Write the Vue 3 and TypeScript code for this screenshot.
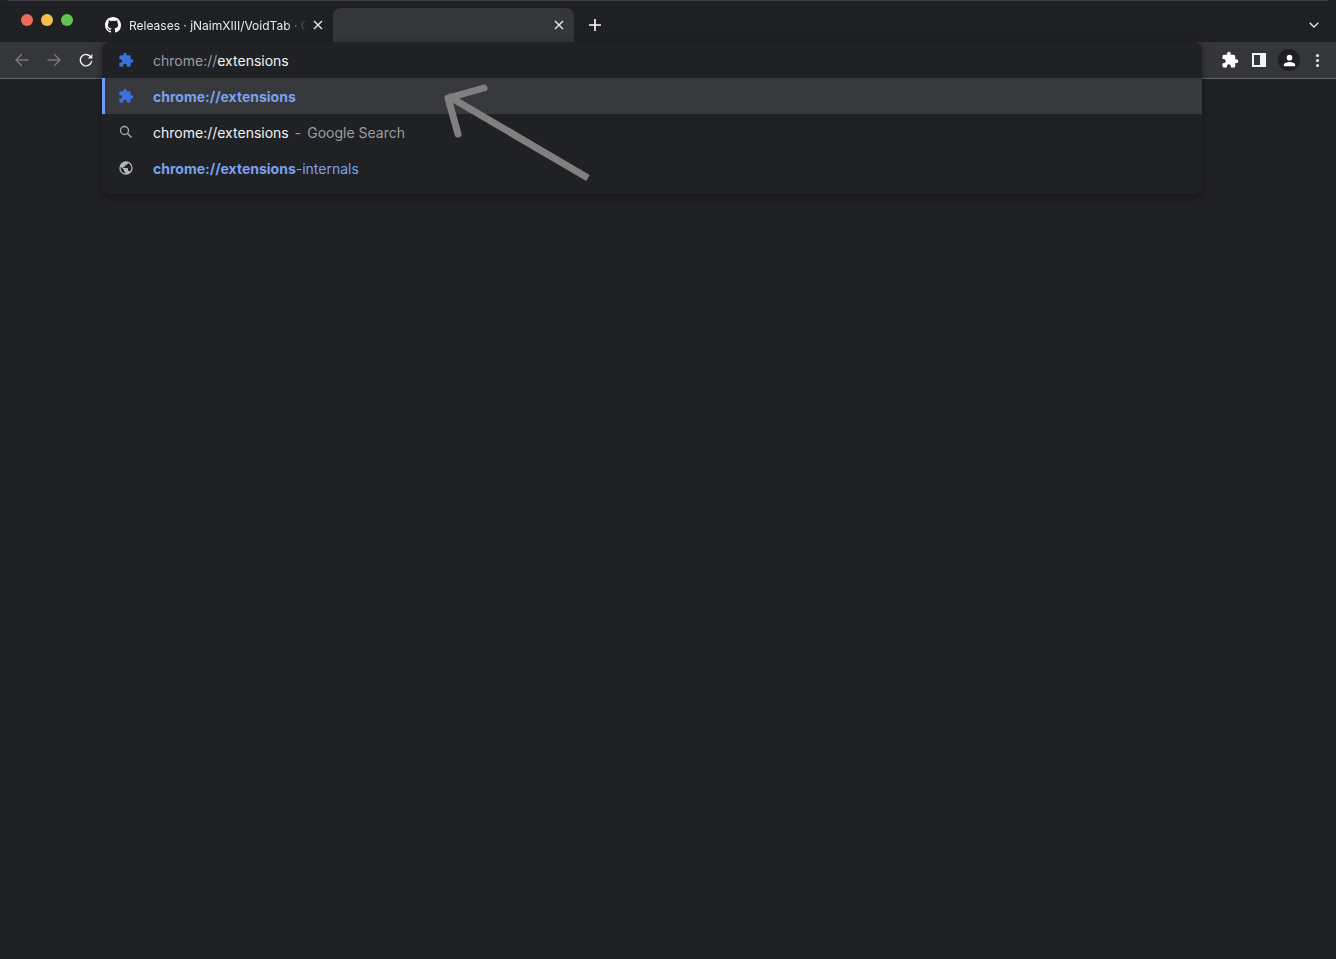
<script setup lang="ts">
const puzzle = 'M20.5 11H19V7a2 2 0 0 0-2-2h-4V3.5a2.5 2.5 0 0 0-5 0V5H4a2 2 0 0 0-2 2v3.8h1.5a2.7 2.7 0 0 1 0 5.4H2V20a2 2 0 0 0 2 2h3.8v-1.5a2.7 2.7 0 0 1 5.4 0V22H17a2 2 0 0 0 2-2v-4h1.5a2.5 2.5 0 0 0 0-5z'
const github = 'M8 0C3.58 0 0 3.58 0 8c0 3.54 2.29 6.53 5.47 7.59.4.07.55-.17.55-.38 0-.19-.01-.82-.01-1.49-2.01.37-2.53-.49-2.69-.94-.09-.23-.48-.94-.82-1.13-.28-.15-.68-.52-.01-.53.63-.01 1.08.58 1.23.82.72 1.21 1.87.87 2.33.66.07-.52.28-.87.51-1.07-1.78-.2-3.64-.89-3.64-3.95 0-.87.31-1.59.82-2.15-.08-.2-.36-1.02.08-2.12 0 0 .67-.21 2.2.82.64-.18 1.32-.27 2-.27s1.36.09 2 .27c1.53-1.04 2.2-.82 2.2-.82.44 1.1.16 1.92.08 2.12.51.56.82 1.27.82 2.15 0 3.07-1.87 3.75-3.65 3.95.29.25.54.73.54 1.48 0 1.07-.01 1.93-.01 2.2 0 .21.15.46.55.38A8.01 8.01 0 0 0 16 8c0-4.42-3.58-8-8-8z'
</script>

<template>
  <div class="window">
    <div class="tabstrip">
      <div class="lights">
        <span class="light red"></span>
        <span class="light yellow"></span>
        <span class="light green"></span>
      </div>
      <div class="tab">
        <svg class="favicon" viewBox="0 0 16 16"><path :d="github" fill="#fff" /></svg>
        <span class="tab-title">Releases · jNaimXIII/VoidTab · GitHub</span>
        <svg class="close" viewBox="0 0 10 10"><path d="M1 1l8 8M9 1l-8 8" /></svg>
      </div>
      <div class="tab active">
        <svg class="close" viewBox="0 0 10 10"><path d="M1 1l8 8M9 1l-8 8" /></svg>
      </div>
      <svg class="plus" viewBox="0 0 12 12"><path d="M6 0v12M0 6h12" /></svg>
      <svg class="chevron" viewBox="0 0 10 6"><path d="M.7.8L5 5l4.3-4.2" /></svg>
    </div>

    <div class="toolbar">
      <div class="nav">
        <svg class="nav-icon dim" viewBox="0 0 14 14"><path d="M13.5 7H1M6.8 1.2L1 7l5.8 5.8" /></svg>
        <svg class="nav-icon dim" viewBox="0 0 14 14"><path d="M.5 7H13M7.2 1.2L13 7l-5.8 5.8" /></svg>
        <svg class="nav-icon" viewBox="0 0 14 14">
          <path d="M11.9 4.1A5.7 5.7 0 1 0 12.7 8" />
          <path class="solid" d="M13.4 1v4.6H8.8z" />
        </svg>
      </div>
      <div class="actions">
        <svg class="act-icon" viewBox="0 0 24 24"><path :d="puzzle" fill="#fff" /></svg>
        <span class="panel-icon"></span>
        <span class="avatar">
          <svg viewBox="0 0 24 24"><path d="M12 12a4 4 0 1 0 0-8 4 4 0 0 0 0 8zm0 2c-2.700 0-8 1.300-8 4v2h16v-2c0-2.700-5.300-4-8-4z" fill="#fff" /></svg>
        </span>
        <span class="dots"><i></i><i></i><i></i></span>
      </div>
    </div>

    <div class="page"></div>

    <div class="omnibox">
      <div class="row input">
        <svg class="row-icon" viewBox="0 0 24 24"><path :d="puzzle" fill="#3b6fd9" /></svg>
        <span class="muted">chrome://</span><span class="white">extensions</span>
      </div>
      <div class="row selected">
        <svg class="row-icon" viewBox="0 0 24 24"><path :d="puzzle" fill="#3b6fd9" /></svg>
        <span class="link bold">chrome://extensions</span>
      </div>
      <div class="row">
        <svg class="row-icon" viewBox="0 0 16 16">
          <circle cx="6.500" cy="6.500" r="4" fill="none" stroke="#a9abae" stroke-width="1.300" />
          <path d="M9.500 9.500l4 4" stroke="#a9abae" stroke-width="1.500" />
        </svg>
        <span class="white">chrome://extensions</span><span class="muted sep">-</span><span class="muted">Google Search</span>
      </div>
      <div class="row">
        <svg class="row-icon" viewBox="0 0 24 24">
          <path fill="#b4b6b9" d="M12 2a10 10 0 1 0 0 20 10 10 0 0 0 0-20zM4 12c0-.6.1-1.200.2-1.800L9 15v1a2 2 0 0 0 2 2v1.900A8 8 0 0 1 4 12zm13.900 5.400A2 2 0 0 0 16 16h-1v-3a1 1 0 0 0-1-1H8v-2h2a1 1 0 0 0 1-1V7h2a2 2 0 0 0 2-2v-.4a8 8 0 0 1 2.900 12.800z" />
        </svg>
        <span class="link bold">chrome://extensions</span><span class="link">-internals</span>
      </div>
    </div>

    <svg class="arrow" viewBox="0 0 160 110">
      <path d="M146 96L6 14" stroke-linecap="butt" />
      <path d="M42 6L6 16l10 36" stroke-linecap="round" stroke-linejoin="round" />
    </svg>
  </div>
</template>

<style scoped>
.window {
  position: relative;
  display: flex;
  flex-direction: column;
  height: 959px;
  background: #202124;
  border-radius: 10px 10px 0 0;
  overflow: hidden;
  font-family: "Inter", "Liberation Sans", sans-serif;
  color: #fff;
}

.tabstrip {
  display: flex;
  align-items: center;
  flex: 0 0 42px;
  background: #1f2024;
  border-top: 1px solid #3f4043;
  box-sizing: border-box;
  padding-top: 7px;
}

.lights {
  display: flex;
  gap: 8px;
  padding: 0 0 11px 21px;
  width: 72px;
}

.light {
  width: 12px;
  height: 12px;
  border-radius: 50%;
}

.red { background: #ec6a5e; }
.yellow { background: #f4bf4f; }
.green { background: #61c454; }

.tab {
  display: flex;
  align-items: center;
  width: 240px;
  height: 34px;
  padding: 0 10px 0 12px;
  box-sizing: border-box;
  border-radius: 8px 8px 0 0;
}

.tab.active {
  width: 241px;
  background: #35363a;
  justify-content: flex-end;
}

.favicon {
  width: 16px;
  height: 16px;
  flex: none;
  margin-right: 8px;
}

.tab-title {
  flex: 1;
  font-size: 12px;
  white-space: nowrap;
  overflow: hidden;
  color: #e8eaed;
  -webkit-mask-image: linear-gradient(to right, #000 88%, transparent 100%);
  mask-image: linear-gradient(to right, #000 88%, transparent 100%);
}

.close {
  width: 10px;
  height: 10px;
  flex: none;
  margin-left: 6px;
}

.close path {
  stroke: #e8eaed;
  stroke-width: 1.400;
  fill: none;
}

.plus {
  width: 12px;
  height: 12px;
  margin-left: 15px;
}

.plus path {
  stroke: #fff;
  stroke-width: 1.600;
  fill: none;
}

.chevron {
  width: 10px;
  height: 6px;
  margin-left: auto;
  margin-right: 17px;
}

.chevron path {
  stroke: #e8eaed;
  stroke-width: 1.300;
  fill: none;
}

.toolbar {
  display: flex;
  align-items: center;
  justify-content: space-between;
  flex: 0 0 37px;
  box-sizing: border-box;
  background: #35363a;
  border-bottom: 1px solid #5f6063;
}

.nav {
  display: flex;
  gap: 18px;
  padding-left: 15px;
}

.nav-icon {
  width: 14px;
  height: 14px;
}

.nav-icon path {
  fill: none;
  stroke: #f1f3f4;
  stroke-width: 1.400;
}

.nav-icon path.solid {
  fill: #f1f3f4;
  stroke: none;
}

.nav-icon.dim path {
  stroke: #77787b;
}

.actions {
  display: flex;
  align-items: center;
  gap: 11px;
  padding-right: 11px;
}

.act-icon {
  width: 18px;
  height: 18px;
}

.panel-icon {
  width: 14px;
  height: 14px;
  box-sizing: border-box;
  border: 2px solid #f1f3f4;
  border-left-width: 2px;
  border-right-width: 6px;
  margin: 0 1px 0 2px;
}

.avatar {
  display: flex;
  align-items: center;
  justify-content: center;
  width: 22px;
  height: 22px;
  border-radius: 50%;
  background: #1f2024;
}

.avatar svg {
  width: 17px;
  height: 17px;
}

.dots {
  display: flex;
  flex-direction: column;
  gap: 2px;
  padding: 0 6px 0 5px;
}

.dots i {
  width: 3px;
  height: 3px;
  border-radius: 50%;
  background: #f1f3f4;
}

.page {
  flex: 1;
  background: #202124;
}

.omnibox {
  position: absolute;
  left: 102px;
  top: 42px;
  width: 1100px;
  height: 152px;
  box-sizing: border-box;
  background: #202124;
  border-radius: 8px;
  box-shadow: 0 3px 10px rgba(0, 0, 0, 0.35);
  font-size: 14px;
  overflow: hidden;
}

.row {
  display: flex;
  align-items: center;
  height: 36px;
  padding-left: 16px;
  white-space: pre;
}

.row.selected {
  background: #37383b;
  box-shadow: inset 3px 0 0 #6d9cf5;
}

.row-icon {
  width: 16px;
  height: 16px;
  flex: none;
  margin-right: 19px;
}

.muted { color: #9b9da0; }
.white { color: #f1f3f4; }
.link { color: #7aa2ee; }
.bold { font-weight: 700; }

.sep {
  margin: 0 6px;
}

.arrow {
  position: absolute;
  left: 442px;
  top: 82px;
  width: 160px;
  height: 110px;
  pointer-events: none;
}

.arrow path {
  fill: none;
  stroke: #808080;
  stroke-width: 7;
}
</style>

<style>
html, body {
  margin: 0;
  background: #202124;
}
</style>
